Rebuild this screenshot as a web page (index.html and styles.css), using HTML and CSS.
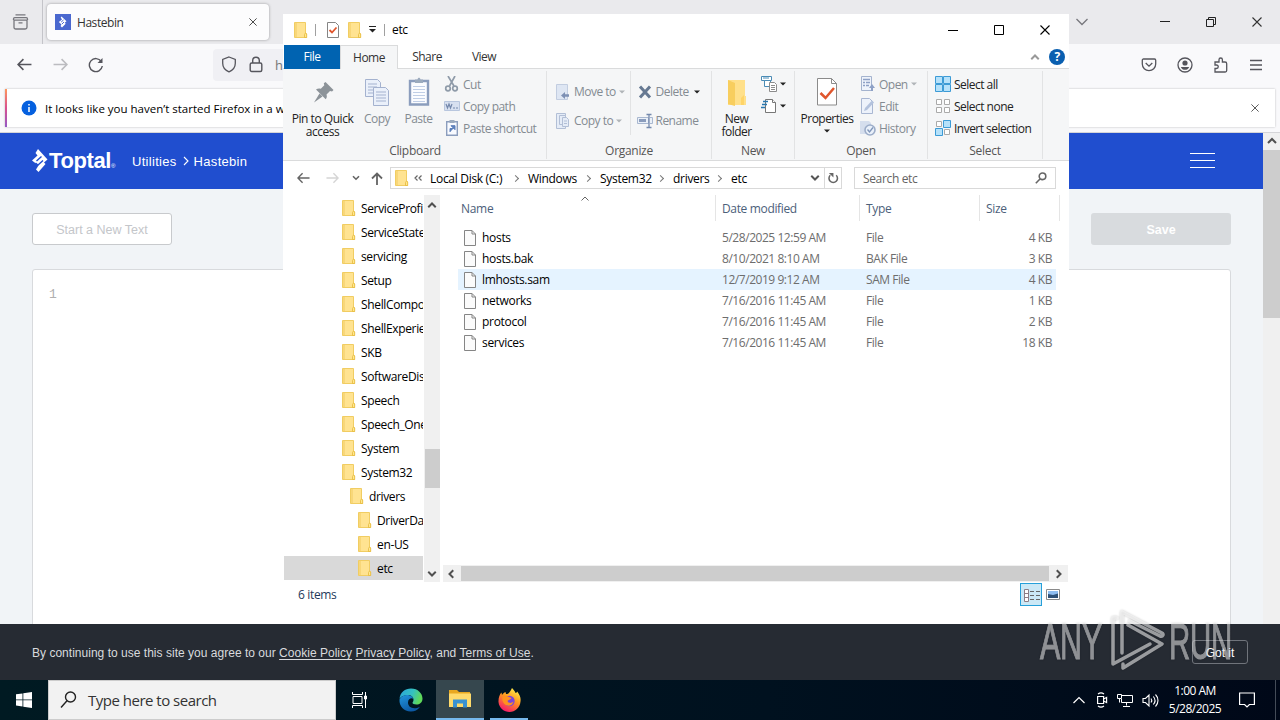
FILE: index.html
```html
<!DOCTYPE html>
<html lang="en">
<head>
    <meta charset="UTF-8">
    <meta name="viewport" content="width=device-width, initial-scale=1.0">
    <title>Hastebin</title>
    <link rel="stylesheet" href="styles.css">
</head>
<body>
    <svg class="sprite" width="0" height="0">
        <symbol id="folder" viewBox="0 0 14 16">
            <path d="M.5.5h11v11h1v4H.5z" fill="#ffe391" stroke="#f1cd62"/>
            <path d="M1 1h2v14H1z" fill="#f8d779"/>
            <path d="M10.5 15.5v-3l1-1.500 1.200 1v3.500z" fill="#ffe88f" stroke="#e6b93c" stroke-width=".8"/>
        </symbol>
        <symbol id="file" viewBox="0 0 12 16">
            <path d="M.5.5h7.500l3.500 3.500v11.500H.5z" fill="#fbfbfb" stroke="#858585"/>
            <path d="M8 .5V4h3.500" fill="none" stroke="#858585"/>
        </symbol>
        <symbol id="down" viewBox="0 0 6 4"><path d="M0 .5h6L3 3.500z" fill="currentColor"/></symbol>
        <symbol id="chev" viewBox="0 0 8 8"><path d="M1 2.200l3 3 3-3" fill="none" stroke="currentColor" stroke-width="1.600"/></symbol>
        <symbol id="arrow" viewBox="0 0 14 12"><path d="M13.500 6H1M6 1L1 6l5 5" fill="none" stroke="currentColor" stroke-width="1.500"/></symbol>
        <symbol id="cross" viewBox="0 0 10 10"><path d="M.5.5l9 9M9.500.5l-9 9" fill="none" stroke="currentColor" stroke-width="1.100"/></symbol>
    </svg>

    <!-- Firefox -->
    <div class="browser">
        <div class="tabstrip">
            <div class="tab-tool">
                <svg width="17" height="16" viewBox="0 0 17 16" fill="none" stroke="#77777d" stroke-width="1.300"><path d="M3.500 .8h10M1.500 6V5c0-.8.5-1.300 1.300-1.300h11.400c.8 0 1.300.5 1.300 1.300v1M2 6.200h13v7c0 1-.7 1.800-1.800 1.800H3.800C2.700 15 2 14.200 2 13.200zM6.500 8.800h4"/></svg>
            </div>
            <div class="tab">
                <svg width="16" height="16" viewBox="0 0 16 16"><path fill="#4a68cf" d="M0 0h16v16H0z"/><path d="M6.500 2.500l5 4.800-1.800 1.500 1 1L7 13.500l-1.500-1.500 1-1.500L3.800 8 7 5.500 5.700 3.500z" fill="#fff"/><path d="M8.500 6l-2.300 2M9 8l-2 2" stroke="#4a68cf"/></svg>
                <span>Hastebin</span>
                <svg class="tab-close" width="8" height="8"><use href="#cross"/></svg>
            </div>
            <div class="win-buttons">
                <svg width="12" height="8" viewBox="0 0 12 8" fill="none" stroke="#77777d" stroke-width="1.300"><path d="M.5 1L6 6.500 11.500 1"/></svg>
                <svg width="10" height="10" viewBox="0 0 10 10" stroke="#222"><path d="M0 4.500h10"/></svg>
                <svg width="10" height="10" viewBox="0 0 10 10" fill="none" stroke="#222"><path d="M.5 2.500h7v7h-7zM2.500 2.500v-2h7v7h-2"/></svg>
                <svg width="10" height="10"><use href="#cross"/></svg>
            </div>
        </div>
        <div class="navbar">
            <svg class="dark" width="15" height="13"><use href="#arrow"/></svg>
            <svg class="faded flip" width="15" height="13"><use href="#arrow"/></svg>
            <svg width="16" height="16" viewBox="0 0 16 16" fill="none" stroke="#55555c" stroke-width="1.400"><path d="M13.300 4.500A6.500 6.500 0 1 0 14.300 9"/><path d="M14.500 1v5h-5z" fill="#55555c" stroke="none"/></svg>
            <div class="urlbar">
                <svg width="16" height="17" viewBox="0 0 16 17" fill="none" stroke="#55555c" stroke-width="1.300"><path d="M8 1l6.300 2.500v3.700c0 4-2.500 7-6.300 8.600C4.200 14.200 1.700 11.200 1.700 7.200V3.500z"/></svg>
                <svg width="14" height="17" viewBox="0 0 14 17" fill="none" stroke="#55555c" stroke-width="1.400"><rect x="1.200" y="7" width="11.600" height="8.500" rx="1.500"/><path d="M3.700 7V4.500a3.300 3.300 0 0 1 6.600 0V7"/></svg>
                <span>h</span>
            </div>
            <div class="nav-icons">
                <svg width="16" height="16" viewBox="0 0 16 16" fill="none" stroke="#55555c" stroke-width="1.300"><path d="M2.500 2h11c.7 0 1.200.5 1.200 1.200V7a6.700 6.700 0 0 1-13.400 0V3.200C1.300 2.500 1.800 2 2.500 2zM4.700 6L8 9.200 11.300 6"/></svg>
                <svg width="16" height="16" viewBox="0 0 16 16"><circle cx="8" cy="8" r="7" fill="none" stroke="#55555c" stroke-width="1.300"/><circle cx="8" cy="6" r="2.600" fill="#55555c"/><path d="M3.800 10h8.400c-.8 2-2.400 2.800-4.200 2.800S4.600 12 3.800 10z" fill="#55555c"/></svg>
                <svg width="16" height="16" viewBox="0 0 16 16" fill="none" stroke="#55555c" stroke-width="1.300"><path d="M2 15V11.500h1.500a1.700 1.700 0 0 0 0-3.500H2V5h4V2.700a1.700 1.700 0 0 1 3.400 0V5H12c1 0 1.700.7 1.700 1.700V13.500c0 .9-.6 1.500-1.500 1.500z"/></svg>
                <svg width="14" height="12" viewBox="0 0 14 12" stroke="#55555c" stroke-width="1.300"><path d="M1 1.500h12M1 6h12M1 10.500h12"/></svg>
            </div>
        </div>
        <div class="notice-wrap">
            <div class="notice">
                <svg width="16" height="16" viewBox="0 0 16 16"><circle cx="8" cy="8" r="7.500" fill="#0560df"/><path d="M8 7v5M8 4v1.600" stroke="#fff" stroke-width="1.500"/></svg>
                <span>It looks like you haven’t started Firefox in a wh</span>
                <svg class="notice-close" width="8" height="8"><use href="#cross"/></svg>
            </div>
        </div>
        <div class="viewport">
            <div class="page">
                <div class="page-header">
                    <svg class="toptal-mark" width="16" height="24" viewBox="0 0 16 24"><path d="M6 0l9.500 10.500-3.500 3 1.500 1.500L6.500 23 4 20.500l2.500-4L0 11.500l5.500-5L3.500 4z" fill="#fff"/><path d="M9.500 7.500L4.500 12M11 11.500l-5.500 5M6.500 16.500L3.500 14" stroke="#204ecf" stroke-width="1.400"/></svg>
                    <span class="toptal">Toptal<small>®</small></span>
                    <span class="crumb">Utilities</span>
                    <svg class="crumb-sep" width="6" height="10" viewBox="0 0 6 10" fill="none" stroke="#fff" stroke-width="1.100"><path d="M1 1l4 4-4 4"/></svg>
                    <span class="crumb">Hastebin</span>
                    <svg class="burger" width="25" height="16" viewBox="0 0 25 16" stroke="#fff"><path d="M0 .5h25M0 7.500h25M0 14.500h25"/></svg>
                </div>
                <div class="actions">
                    <button class="btn new-text">Start a New Text</button>
                    <button class="btn save">Save</button>
                </div>
                <div class="editor">1</div>
            </div>
            <div class="page-scroll">
                <svg width="10" height="10" viewBox="0 0 10 10" fill="none" stroke="#505050" stroke-width="2"><path d="M1 7l4-4 4 4"/></svg>
                <div class="page-thumb"></div>
            </div>
        </div>
        <div class="cookies">
            <p>By continuing to use this site you agree to our <u>Cookie Policy</u> <u>Privacy Policy</u>, and <u>Terms of Use</u>.</p>
            <button class="got-it">Got it</button>
        </div>
    </div>

    <!-- File Explorer -->
    <div class="explorer">
        <div class="titlebar">
            <svg width="14" height="16"><use href="#folder"/></svg>
            <i class="bar"></i>
            <svg class="check-doc" width="12" height="16" viewBox="0 0 12 16" fill="none"><path d="M.5.5h8l3 3v12H.5z" fill="#fff" stroke="#858585"/><path d="M2.500 8l2.500 2.500 4.500-5" stroke="#e0562d" stroke-width="1.800"/></svg>
            <svg width="14" height="16"><use href="#folder"/></svg>
            <svg width="7" height="7" viewBox="0 0 7 7"><path d="M0 .5h7" stroke="#222"/><path d="M0 3h7L3.500 6.500z" fill="#222"/></svg>
            <i class="bar"></i>
            <span class="title">etc</span>
            <div class="caption">
                <svg width="10" height="10" viewBox="0 0 10 10" stroke="#000"><path d="M0 5.500h10"/></svg>
                <svg width="10" height="10" viewBox="0 0 10 10" fill="none" stroke="#000"><path d="M.5.5h9v9h-9z"/></svg>
                <svg width="10" height="10"><use href="#cross"/></svg>
            </div>
        </div>
        <div class="tabs">
            <span class="tab-file">File</span>
            <span class="tab-home">Home</span>
            <span class="tab-share">Share</span>
            <span class="tab-view">View</span>
            <svg class="collapse" width="10" height="10"><use href="#chev"/></svg>
            <b class="help">?</b>
        </div>
        <div class="ribbon">
            <div class="group clipboard">
                <div class="tools">
                    <div class="big pin">
                        <svg width="32" height="34" viewBox="0 0 32 34"><path d="M18.500 6l8 8-1.500 1.500-2-.5-3.500 3.500c.7 2 .3 3.500-.8 4.800L9 13.500c1.500-1 3-1.300 4.800-.7l3.500-3.500-.5-2zM12.500 17.500l3 3L7 26.500z" fill="#8c9399"/></svg>
                        <span>Pin to Quick<br>access</span>
                    </div>
                    <div class="big copy off">
                        <svg width="26" height="34" viewBox="0 0 26 34" fill="#eaf0fa" stroke="#a4b2cf"><path d="M1.500 3.500h12l3 3v14h-15z"/><path d="M4 8h9M4 11h9M4 14h9M4 17h9"/><path d="M9.500 11.500h12l3 3v15h-15z"/><path d="M12 16h10M12 19h10M12 22h10M12 25h10"/></svg>
                        <span>Copy</span>
                    </div>
                    <div class="big paste off">
                        <svg width="22" height="34" viewBox="0 0 22 34"><path d="M2 5h18v23.500H2z" fill="#fbfcff" stroke="#8b9dbd" stroke-width="2.400"/><path d="M7 7V3.500h2.500C9.800 1 12.200 1 12.500 3.500H15V7z" fill="#9baabd"/><path d="M5 10.500h12M5 13.500h12M5 16.500h12M5 19.500h12M5 22.500h12M5 25.500h12" stroke="#c0cee6"/></svg>
                        <span>Paste</span>
                    </div>
                    <div class="smalls off">
                        <div><svg width="16" height="16" viewBox="0 0 16 16" fill="none" stroke="#8f9ba9" stroke-width="1.700"><path d="M4 0l6 10M11 0L5.500 10"/><circle cx="4" cy="12.500" r="2.300"/><circle cx="11" cy="12.500" r="2.300"/></svg>Cut</div>
                        <div><svg width="16" height="16" viewBox="0 0 16 16"><path d="M.5 3.500h15v9H.5z" fill="#d7e0f0" stroke="#b8c6de"/><path d="M2 6l1.500 4L5 6l1.500 4L8 6M9 10h2M12 10h2" fill="none" stroke="#7488ac" stroke-width="1.200"/></svg>Copy path</div>
                        <div><svg width="16" height="16" viewBox="0 0 16 16"><path d="M2.700 1.700h10.600v13.600H2.700z" fill="#f8faff" stroke="#8b9dbd" stroke-width="1.400"/><path d="M5.500 0h5v3h-5z" fill="#9baabd"/><path d="M6 12V8.500h3.500M7 5.700h4v4z" fill="#5d80bc" stroke="#5d80bc"/></svg>Paste shortcut</div>
                    </div>
                </div>
                <div class="name">Clipboard</div>
            </div>
            <div class="group organize">
                <div class="tools">
                    <div class="mids off">
                        <div><svg width="16" height="16" viewBox="0 0 16 16"><path d="M1.500.5h11v15h-11z" fill="#dee6f3" stroke="#c2cde0"/><path d="M6 11.500l4-3.500v2.300h4v2.500h-4V15z" fill="#7d90b4"/></svg>Move to <svg class="dd" width="6" height="4"><use href="#down"/></svg></div>
                        <div><svg width="16" height="16" viewBox="0 0 16 16" fill="#e5ecf7" stroke="#b2bfd6"><path d="M1.500.5h9v15h-9z"/><path d="M4.500 2.500h6v9h-6z"/><path d="M7.500 4.500h4l2 2v7h-6zM9 8h3M9 10.500h3"/></svg>Copy to <svg class="dd" width="6" height="4"><use href="#down"/></svg></div>
                    </div>
                    <div class="mids del off">
                        <div><svg width="16" height="16" viewBox="0 0 16 16"><path d="M3 2.500l10 11M13 2.500l-10 11" stroke="#667992" stroke-width="3"/></svg>Delete <svg class="dd black" width="6" height="4"><use href="#down"/></svg></div>
                        <div><svg width="16" height="16" viewBox="0 0 16 16"><path d="M.5 4.500h11v6H.5zM13 4.500h2.500v6H13" fill="#eaf0f8" stroke="#a9b8d0"/><path d="M2 6h7v3H2z" fill="#8b9dbd"/><path d="M9.500 1.500h5M12 1.500v13M9.500 14.500h5" stroke="#7489ad" stroke-width="1.300"/></svg>Rename</div>
                    </div>
                </div>
                <div class="name">Organize</div>
            </div>
            <div class="group new">
                <div class="tools">
                    <div class="big newf">
                        <svg width="22" height="34" viewBox="0 0 22 34"><path d="M2 4h17v16h1v9H2z" fill="#ffe08a"/><path d="M2 4l7 3v23l-7-2z" fill="#f8ce5e"/><path d="M15 29v-7l3-3v10z" fill="#ffd467"/></svg>
                        <span>New<br>folder</span>
                    </div>
                    <div class="smalls icons">
                        <div><svg width="16" height="16" viewBox="0 0 16 16" fill="#fff"><path d="M.5.5h10v4H.5z" stroke="#4a8bb5"/><path d="M2 2h6" stroke="#4a8bb5"/><path d="M3.500 4.500h6v6h-6z" stroke="#4a8bb5"/><path d="M8.500 6.500h5l2 2v7h-7zM10 9.500h4M10 11.500h4M10 13.500h4" stroke="#8c8c8c"/></svg><svg class="dd black" width="6" height="4"><use href="#down"/></svg></div>
                        <div><svg width="16" height="16" viewBox="0 0 16 16" fill="#fff"><path d="M4.500 1.500h7l3 3v10h-10z" stroke="#777"/><path d="M11.500 1.500v3h3" stroke="#777"/><path d="M2 3.500h5M1 6.500h5M0 9.500h4" stroke="#2878b0" stroke-width="1.300"/></svg><svg class="dd black" width="6" height="4"><use href="#down"/></svg></div>
                    </div>
                </div>
                <div class="name">New</div>
            </div>
            <div class="group open">
                <div class="tools">
                    <div class="big props">
                        <svg width="22" height="34" viewBox="0 0 22 34" fill="none"><path d="M1.500 2.500h14l5 5v21.500h-19z" fill="#fff" stroke="#8b8b8b"/><path d="M15.500 2.500v5h5" stroke="#8b8b8b"/><path d="M4.500 17l5 5L18 12" stroke="#e0562d" stroke-width="2.500"/></svg>
                        <span>Properties</span>
                        <svg class="dd black" width="6" height="4"><use href="#down"/></svg>
                    </div>
                    <div class="smalls off">
                        <div><svg width="16" height="16" viewBox="0 0 16 16"><path d="M1.500.5h10v14h-10z" fill="#eef3fb" stroke="#a4b3ce"/><path d="M3 3.500h7M3 6.500h2M6 6.500h4M3 9.500h2M6 9.500h3" stroke="#8ea1c6" stroke-width="1.300"/><path d="M11 15v-3H9l3-4 3 4h-2v3z" fill="#8ea1c6"/></svg>Open <svg class="dd" width="6" height="4"><use href="#down"/></svg></div>
                        <div><svg width="16" height="16" viewBox="0 0 16 16"><path d="M1.500.5h8l3 3v12h-11z" fill="#edf2fb" stroke="#a9b7d2"/><path d="M4 13l1-3L12 2.500l2 2L7 12z" fill="#b3c2dd"/></svg>Edit</div>
                        <div><svg width="16" height="16" viewBox="0 0 16 16"><path d="M0 1h9l2 2v11H0z" fill="#d5deed"/><circle cx="10" cy="10" r="5" fill="#e9f0fa" stroke="#9cadc9" stroke-width="1.600"/><path d="M7.500 9.500L9.500 12 13 7.500" fill="none" stroke="#7f95b9" stroke-width="1.300"/></svg>History</div>
                    </div>
                </div>
                <div class="name">Open</div>
            </div>
            <div class="group select">
                <div class="tools">
                    <div class="smalls">
                        <div><svg width="16" height="16" viewBox="0 0 16 16" fill="#b5e1fa" stroke="#3c9bd6"><path d="M.5.5h7v7h-7zM8.500.5h7v7h-7zM.5 8.500h7v7h-7zM8.500 8.500h7v7h-7z"/></svg>Select all</div>
                        <div><svg width="16" height="16" viewBox="0 0 16 16" fill="#fff" stroke="#aaa"><path d="M1.500 1.500h5v5h-5zM9.500 1.500h5v5h-5zM1.500 9.500h5v5h-5zM9.500 9.500h5v5h-5z"/></svg>Select none</div>
                        <div><svg width="16" height="16" viewBox="0 0 16 16" fill="#fff" stroke="#aaa"><path d="M1.500 1.500h5v5h-5zM9.500 9.500h5v5h-5z"/><path d="M8.500.5h7v7h-7zM.5 8.500h7v7h-7z" fill="#b5e1fa" stroke="#3c9bd6"/></svg>Invert selection</div>
                    </div>
                </div>
                <div class="name">Select</div>
            </div>
        </div>
        <div class="address-row">
            <svg class="nav-back" width="13" height="12"><use href="#arrow"/></svg>
            <svg class="nav-fwd flip" width="13" height="12"><use href="#arrow"/></svg>
            <svg class="nav-recent" width="8" height="8"><use href="#chev"/></svg>
            <svg class="nav-up" width="12" height="13" viewBox="0 0 12 13" fill="none" stroke="#646464" stroke-width="1.800"><path d="M6 13V1.500M1 6.500l5-5 5 5"/></svg>
            <div class="address">
                <svg width="14" height="16"><use href="#folder"/></svg>
                <svg class="laquo" width="8" height="6" viewBox="0 0 8 6" fill="none" stroke="#666" stroke-width="1.200"><path d="M3.500.5L1 3l2.500 2.500M7.500.5L5 3l2.500 2.500"/></svg>
                <span class="c1">Local Disk (C:)</span><i class="sep"></i>
                <span class="c2">Windows</span><i class="sep"></i>
                <span class="c3">System32</span><i class="sep"></i>
                <span class="c4">drivers</span><i class="sep"></i>
                <span class="c5">etc</span>
                <svg class="addr-down" width="10" height="10"><use href="#chev"/></svg>
                <svg class="refresh" width="12" height="13" viewBox="0 0 12 13" fill="none" stroke="#666" stroke-width="1.700"><path d="M9.500 3.500A4.600 4.600 0 1 1 3 3.500"/><path d="M1.500 1H6.500v5z" fill="#666" stroke="none"/></svg>
            </div>
            <div class="search">
                <span>Search etc</span>
                <svg width="12" height="12" viewBox="0 0 12 12" fill="none" stroke="#666" stroke-width="1.600"><circle cx="7.500" cy="4.300" r="3.300"/><path d="M5 7L.8 11.200"/></svg>
            </div>
        </div>
        <div class="content">
            <div class="tree">
                <div><svg width="14" height="16"><use href="#folder"/></svg>ServiceProfiles</div>
                <div><svg width="14" height="16"><use href="#folder"/></svg>ServiceState</div>
                <div><svg width="14" height="16"><use href="#folder"/></svg>servicing</div>
                <div><svg width="14" height="16"><use href="#folder"/></svg>Setup</div>
                <div><svg width="14" height="16"><use href="#folder"/></svg>ShellComponents</div>
                <div><svg width="14" height="16"><use href="#folder"/></svg>ShellExperiences</div>
                <div><svg width="14" height="16"><use href="#folder"/></svg>SKB</div>
                <div><svg width="14" height="16"><use href="#folder"/></svg>SoftwareDistribution</div>
                <div><svg width="14" height="16"><use href="#folder"/></svg>Speech</div>
                <div><svg width="14" height="16"><use href="#folder"/></svg>Speech_OneCore</div>
                <div><svg width="14" height="16"><use href="#folder"/></svg>System</div>
                <div><svg width="14" height="16"><use href="#folder"/></svg>System32</div>
                <div class="l2"><svg width="14" height="16"><use href="#folder"/></svg>drivers</div>
                <div class="l3"><svg width="14" height="16"><use href="#folder"/></svg>DriverData</div>
                <div class="l3"><svg width="14" height="16"><use href="#folder"/></svg>en-US</div>
                <div class="l3 current"><svg width="14" height="16"><use href="#folder"/></svg>etc</div>
            </div>
            <div class="tree-scroll">
                <svg class="up" width="10" height="10"><use href="#chev"/></svg>
                <div class="tree-thumb"></div>
                <svg width="10" height="10"><use href="#chev"/></svg>
            </div>
            <div class="list">
                <div class="row head">
                    <span>Name<svg class="sort" width="8" height="5" viewBox="0 0 8 5" fill="none" stroke="#666"><path d="M.5 4.500L4 1l3.500 3.500"/></svg></span><span>Date modified</span><span>Type</span><span>Size</span>
                </div>
                <div class="row"><span><svg width="12" height="16"><use href="#file"/></svg>hosts</span><span>5/28/2025 12:59 AM</span><span>File</span><span>4 KB</span></div>
                <div class="row"><span><svg width="12" height="16"><use href="#file"/></svg>hosts.bak</span><span>8/10/2021 8:10 AM</span><span>BAK File</span><span>3 KB</span></div>
                <div class="row hover"><span><svg width="12" height="16"><use href="#file"/></svg>lmhosts.sam</span><span>12/7/2019 9:12 AM</span><span>SAM File</span><span>4 KB</span></div>
                <div class="row"><span><svg width="12" height="16"><use href="#file"/></svg>networks</span><span>7/16/2016 11:45 AM</span><span>File</span><span>1 KB</span></div>
                <div class="row"><span><svg width="12" height="16"><use href="#file"/></svg>protocol</span><span>7/16/2016 11:45 AM</span><span>File</span><span>2 KB</span></div>
                <div class="row"><span><svg width="12" height="16"><use href="#file"/></svg>services</span><span>7/16/2016 11:45 AM</span><span>File</span><span>18 KB</span></div>
                <div class="list-scroll">
                    <svg class="left" width="10" height="10"><use href="#chev"/></svg>
                    <div class="list-thumb"></div>
                    <svg class="right" width="10" height="10"><use href="#chev"/></svg>
                </div>
            </div>
        </div>
        <div class="status">
            <span>6 items</span>
            <div class="view-details">
                <svg width="16" height="13" viewBox="0 0 16 13" fill="none" stroke="#666"><path d="M.5.5h4v12h-4zM.5 4.500h4M.5 8.500h4" fill="#fff" stroke="#8c7d86"/><path d="M6 2.500h4M12 2.500h4M6 6.500h4M12 6.500h4M6 10.500h4M12 10.500h4"/></svg>
            </div>
            <svg width="14" height="11" viewBox="0 0 14 11"><path d="M.5.5h13v10H.5z" fill="#fff" stroke="#8a8a8a"/><path d="M2 2h10v7H2z" fill="#8fbdf0"/><path d="M2 5l5 1 5-1.500V9H2z" fill="#2e5076"/></svg>
        </div>
    </div>

    <!-- Watermark -->
    <svg class="watermark" width="200" height="70" viewBox="0 0 200 70">
        <g fill="#fff" stroke="#fff" stroke-width="1" opacity=".5" font-family="Liberation Sans, sans-serif" font-size="50">
            <text x="4" y="53" textLength="62" lengthAdjust="spacingAndGlyphs">ANY</text>
            <text x="133" y="53" textLength="63" lengthAdjust="spacingAndGlyphs">RUN</text>
        </g>
        <g fill="none" stroke="#fff" stroke-width="3.500" stroke-linejoin="round" stroke-linecap="round" opacity=".55">
            <path d="M86 47V6l40 21c2 1 1 4-2 3L94 15"/>
            <path d="M81 12h-4v46l37-20"/>
            <path d="M92 19l34 19-39 24v-4"/>
        </g>
    </svg>

    <!-- Taskbar -->
    <div class="taskbar">
        <svg class="start" width="16" height="16" viewBox="0 0 16 16" fill="#fff"><path d="M0 2.300l6.500-.9v6.100H0zM7.300 1.300L16 0v7.500H7.300zM0 8.300h6.500v6.200L0 13.600zM7.300 8.300H16V16l-8.700-1.300z"/></svg>
        <div class="task-search">
            <svg width="17" height="18" viewBox="0 0 17 18" fill="none" stroke="#222" stroke-width="1.400"><circle cx="10.500" cy="6" r="5"/><path d="M7 9.800L1 16.500"/></svg>
            <span>Type here to search</span>
        </div>
        <div class="task-item">
            <svg width="16" height="16" viewBox="0 0 16 16" fill="none" stroke="#fff"><path d="M.5 0v2.500h10V0M1 4.500h9v7H1zM.5 16v-2.500h10V16M13.500 0v16"/><path d="M12.500 4h2v3h-2z" fill="#fff"/></svg>
        </div>
        <div class="task-item">
            <svg width="24" height="24" viewBox="0 0 24 24">
                <defs>
                    <linearGradient id="e1" x1="0" y1="0" x2="1" y2="0.300"><stop offset="0" stop-color="#2aa5dd"/><stop offset=".6" stop-color="#35c1c0"/><stop offset="1" stop-color="#5fd95a"/></linearGradient>
                    <linearGradient id="e2" x1="0" y1="0" x2="0.500" y2="1"><stop offset="0" stop-color="#2296dd"/><stop offset="1" stop-color="#0c59a4"/></linearGradient>
                </defs>
                <path d="M.5 11C1 4.500 6 .5 12 .5c7 0 11.500 5 11.500 10 0 4-3 6-6 6-2.500 0-4-.8-4-1.700 0-.8 1-1 1-3C14.500 9 12 7 9 7 5 7 1.500 9 .5 11z" fill="url(#e1)"/>
                <path d="M.5 11.500C2 8 6 6.500 9 7c3 .3 5 2 5.400 4-1.400-1.500-5.400-.5-5.400 3.500 0 5 5.500 7.500 12 4.200-2.500 3.500-6 5-9.500 4.800C5 23.300 0 18.500.5 11.500z" fill="url(#e2)"/>
            </svg>
        </div>
        <div class="task-item active">
            <svg width="22" height="19" viewBox="0 0 22 19"><path d="M0 1h8l2 2h11v15H0z" fill="#e9a820"/><path d="M0 4.500h22V18H0z" fill="#ffda6b"/><path d="M4 18.500v-8h14v8h-4v-4H8v4z" fill="#3a92d2"/></svg>
        </div>
        <div class="task-item running">
            <svg width="23" height="24" viewBox="0 0 23 24">
                <defs><linearGradient id="f1" x1=".8" y1="0" x2=".3" y2="1"><stop offset="0" stop-color="#fff44f"/><stop offset=".45" stop-color="#ff9a1f"/><stop offset="1" stop-color="#f5156c"/></linearGradient></defs>
                <path d="M14 0c2 2 3 3.500 3.500 5 1-.2 1.500-.8 1.700-1.500C22 7 23 10 22.500 13.500 22 19.500 17 24 11.500 24S1 20 .5 14C.3 10 1.500 6.500 3.500 4.500L4 7c1-1.500 2-2.300 3.500-3l.5 2c3 0 4-2 6-6z" fill="url(#f1)"/>
                <circle cx="11.500" cy="13" r="5.200" fill="#7a45dc"/>
                <path d="M4.500 9c2-1.500 4.500-1 6.500 0l2.500 1c-1 2-3.500 1.500-4 3 1 2.500 4 2.500 6 .5-1 4.500-6 5.500-9 2.500-2-2-2.500-4.500-2-7z" fill="#ff921e"/>
            </svg>
        </div>
        <div class="tray">
            <svg width="12" height="8" viewBox="0 0 12 8" fill="none" stroke="#fff" stroke-width="1.200"><path d="M.5 7L6 1.500 11.500 7"/></svg>
            <svg width="12" height="16" viewBox="0 0 12 16" fill="none" stroke="#fff" stroke-width="1.200"><path d="M1.600 4.500h6v7h-6zM7.600 7l3-1.500v5l-3-1.500M2 2c2-1.500 4-1.500 6 0M2 14c2 1.500 4 1.500 6 0"/></svg>
            <svg width="16" height="15" viewBox="0 0 16 15" fill="none" stroke="#fff"><path d="M5 2.500h10.500v7H4.500V6M9.500 9.500v3M6 13.500h7M.5 1.500h4v4h-4zM2.500 5.500v4"/></svg>
            <svg width="17" height="15" viewBox="0 0 17 15" fill="none" stroke="#fff" stroke-width="1.100"><path d="M1 5.500h2.500L7 2v11L3.500 9.500H1zM9 5.500c1 1.300 1 2.700 0 4M11.300 3.500c2.200 2.500 2.200 5.500 0 8M13.500 1.500c3.300 3.500 3.300 8.500 0 12"/></svg>
            <div class="clock">1:00 AM<br>5/28/2025</div>
            <svg class="notif" width="16" height="16" viewBox="0 0 16 16" fill="none" stroke="#fff" stroke-width="1.200"><path d="M.6 1h14.800v11.500h-5L8 15l-2.400-2.500h-5z"/></svg>
        </div>
    </div>
</body>
</html>
```
FILE: styles.css
```css
* {
    box-sizing: border-box;
}

body {
    margin: 0;
    width: 1280px;
    height: 720px;
    overflow: hidden;
    position: relative;
    font-family: "Open Sans", "Noto Sans", sans-serif;
    font-size: 12px;
    letter-spacing: -0.35px;
    color: #000;
}

svg {
    display: block;
    flex: none;
}

button {
    font-family: "Liberation Sans", sans-serif;
}

.sprite {
    position: absolute;
}

.flip {
    transform: scaleX(-1);
}

/* Firefox */
.browser {
    height: 680px;
    display: flex;
    flex-direction: column;
    background: #f9f9fb;
}

.tabstrip {
    height: 44px;
    display: flex;
    align-items: center;
    background: #eaeaed;
    color: #333;
}

.tab-tool {
    width: 43px;
    height: 44px;
    padding: 14px 0 0 12px;
    border-right: 1px solid #c4c4c9;
}

.tab {
    width: 222px;
    height: 36px;
    margin-left: 4px;
    padding: 0 12px 0 8px;
    display: flex;
    align-items: center;
    gap: 6px;
    background: #fcfcfd;
    border-radius: 4px;
    box-shadow: 0 0 3px rgba(0, 0, 0, 0.35);
    letter-spacing: -0.45px;
}

.tab-close {
    margin-left: auto;
}

.win-buttons {
    margin-left: auto;
    padding-right: 18px;
    display: flex;
    align-items: center;
    gap: 36px;
}

.win-buttons svg:first-child {
    margin-right: 36px;
}

.navbar {
    height: 41px;
    display: flex;
    align-items: center;
    padding-left: 17px;
    gap: 21px;
}

.navbar > svg:nth-child(3) {
    margin-left: -1px;
}

.dark {
    color: #55555c;
}

.faded {
    color: #bcbcc0;
}

.urlbar {
    width: 852px;
    height: 32px;
    margin-left: 88px;
    padding-left: 8px;
    display: flex;
    align-items: center;
    gap: 12px;
    background: #f0f0f4;
    border-radius: 4px;
    color: #777;
    font-size: 13px;
}

.nav-icons {
    margin-left: auto;
    padding-right: 17px;
    display: flex;
    align-items: center;
    gap: 20px;
}

.notice-wrap {
    height: 48px;
    padding: 4px 5px 6px;
    border-bottom: 1px solid #d5d5d8;
}

.notice {
    height: 38px;
    padding: 0 16px 0 14px;
    display: flex;
    align-items: center;
    gap: 8px;
    background: #fff;
    border-left: 2px solid;
    border-image: linear-gradient(#ff9a5a, #d9508f, #9059c8) 1;
    box-shadow: 0 0 2px rgba(0, 0, 0, 0.25);
    font-size: 11.5px;
    letter-spacing: 0;
}

.notice-close {
    margin-left: auto;
    color: #444;
}

.viewport {
    height: 491px;
    display: flex;
}

.page {
    width: 1263px;
    background: #f1f4f7;
    overflow: hidden;
}

.page-header {
    height: 56px;
    padding: 0 48px 0 32px;
    display: flex;
    align-items: center;
    background: #204ecf;
    color: #fff;
    font-family: "Liberation Sans", sans-serif;
}

.toptal {
    width: 84px;
    padding-left: 1px;
    font-size: 22px;
    font-weight: bold;
    letter-spacing: -0.4px;
    white-space: nowrap;
}

.toptal small {
    font-size: 6px;
    font-weight: normal;
}

.crumb {
    font-size: 13px;
    letter-spacing: 0.3px;
}

.crumb-sep {
    margin: 0 5px 0 6px;
}

.burger {
    margin-left: auto;
}

.actions {
    display: flex;
    justify-content: space-between;
    padding: 24px 32px;
}

.btn {
    width: 140px;
    height: 32px;
    padding: 2px 0 0;
    border-radius: 3px;
    font-size: 12.5px;
}

.new-text {
    background: #fff;
    border: 1px solid #c8cacd;
    color: #c4c6ca;
}

.save {
    background: #d8dbde;
    border: none;
    color: #fff;
    font-weight: bold;
}

.editor {
    height: 400px;
    margin: 0 32px;
    padding: 17px 16px;
    background: #fff;
    border: 1px solid #d8dadd;
    border-radius: 3px;
    color: #b0b0b0;
    font-family: "Liberation Mono", monospace;
    font-size: 13px;
}

.page-scroll {
    width: 17px;
    background: #f0f0f0;
    display: flex;
    flex-direction: column;
    align-items: center;
}

.page-scroll svg {
    margin: 3px 0 4px;
}

.page-thumb {
    width: 17px;
    height: 168px;
    background: #cdcdcd;
}

.cookies {
    height: 56px;
    padding: 0 32px;
    display: flex;
    align-items: center;
    justify-content: space-between;
    background: #262b33;
    color: #d8dadd;
    font-family: "Liberation Sans", sans-serif;
    letter-spacing: 0.02px;
}

.cookies p {
    margin: 2px 0 0;
}

.cookies u {
    text-underline-offset: 2px;
}

.got-it {
    width: 56px;
    height: 24px;
    padding: 2px 0 0;
    background: none;
    border: 1px solid #70747b;
    border-radius: 3px;
    color: #fff;
    font-size: 12px;
}

/* Explorer window, floats over the browser */
.explorer {
    position: absolute;
    left: 283px;
    top: 14px;
    width: 786px;
    height: 594px;
    background: #fff;
}

.titlebar {
    height: 31px;
    padding-left: 11px;
    display: flex;
    align-items: center;
}

.bar {
    width: 1px;
    height: 12px;
    margin: 0 9px 0 7px;
    background: #a0a0a0;
}

.check-doc {
    margin: 0 9px 0 2px;
}

.titlebar .check-doc + svg {
    margin-right: 7px;
}

.titlebar svg + .bar:nth-of-type(2) {
    margin: 0 7px 0 8px;
}

.caption {
    margin-left: auto;
    padding-right: 19px;
    display: flex;
    gap: 36px;
}

.tabs {
    height: 24px;
    padding: 0 4px 0 1px;
    display: flex;
    align-items: center;
    border-bottom: 1px solid #dadbdc;
    line-height: 23px;
    text-align: center;
    letter-spacing: -0.5px;
    color: #333;
}

.tab-file {
    width: 56px;
    height: 24px;
    background: #0063b1;
    color: #fff;
}

.tab-home {
    width: 58px;
    height: 24px;
    background: #f5f6f7;
    border: 1px solid #dadbdc;
    border-bottom: none;
}

.tab-share {
    width: 58px;
}

.tab-view {
    width: 56px;
}

.collapse {
    margin-left: auto;
    margin-right: 9px;
    color: #999;
    transform: scaleY(-1);
}

.help {
    width: 16px;
    height: 16px;
    border-radius: 50%;
    background: #0a5fb0;
    color: #fff;
    line-height: 16px;
}

.ribbon {
    height: 92px;
    padding-left: 1px;
    display: flex;
    background: #f5f6f7;
    border-bottom: 1px solid #dadbdc;
    line-height: 13px;
    letter-spacing: -0.52px;
    color: #222;
}

.group {
    display: flex;
    flex-direction: column;
    border-right: 1px solid #e2e3e4;
    height: 88px;
    margin-top: 2px;
}

.clipboard {
    width: 263px;
}

.organize {
    width: 165px;
}

.new {
    width: 83px;
}

.open {
    width: 133px;
}

.select {
    width: 115px;
}

.tools {
    height: 73px;
    display: flex;
}

.name {
    text-align: center;
    color: #555;
    line-height: 14px;
    letter-spacing: -0.3px;
}

.off {
    color: #848b92;
}

.big {
    display: flex;
    flex-direction: column;
    align-items: center;
    padding-top: 5px;
    text-align: center;
    white-space: nowrap;
}

.big span {
    padding-top: 2px;
}

.pin {
    width: 77px;
    letter-spacing: -0.45px;
}

.copy {
    width: 32px;
}

.paste {
    width: 51px;
}

.newf {
    width: 49px;
}

.props {
    width: 64px;
}

.props .dd {
    margin-top: 4px;
}

.smalls > div,
.mids > div {
    height: 22px;
    display: flex;
    align-items: center;
    gap: 3px;
    white-space: nowrap;
}

.smalls {
    padding-top: 2px;
}

.props + .smalls {
    padding-left: 1px;
}

.mids {
    padding: 6px 0 0 8px;
    width: 85px;
}

.mids > div {
    height: 29px;
}

.mids.del {
    padding-left: 6px;
    margin-left: 1px;
    border-left: 1px solid #e2e3e4;
    height: 64px;
}

.del .dd {
    margin-left: 2px;
}

.dd {
    color: #b0b4b8;
}

.black {
    color: #222;
}

.select .smalls {
    padding-left: 7px;
}

.address-row {
    height: 34px;
    padding-left: 14px;
    display: flex;
    align-items: center;
    color: #646464;
}

.nav-fwd {
    margin-left: 16px;
    color: #d5d5d5;
}

.nav-recent {
    margin-left: 13px;
}

.nav-up {
    margin-left: 11px;
}

.address {
    width: 452px;
    height: 22px;
    margin-left: 7px;
    padding-left: 4px;
    display: flex;
    align-items: center;
    border: 1px solid #d9d9d9;
    color: #000;
    letter-spacing: -0.3px;
}

.laquo {
    margin: 0 8px 0 5px;
}

.sep {
    width: 5px;
    height: 5px;
    margin-right: 10px;
    border-top: 1.4px solid #777;
    border-right: 1.4px solid #777;
    transform: rotate(45deg);
}

.c1 {
    width: 83px;
}

.c2 {
    width: 57px;
}

.c3 {
    width: 58px;
}

.c4 {
    width: 43px;
}

.addr-down {
    margin-left: auto;
    margin-right: 4px;
    color: #555;
}

.refresh {
    width: 17px;
    height: 20px;
    padding: 4px 2px;
    border-left: 1px solid #d9d9d9;
}

.search {
    width: 202px;
    height: 22px;
    margin-left: 12px;
    padding: 0 8px;
    display: flex;
    align-items: center;
    justify-content: space-between;
    border: 1px solid #d9d9d9;
}

.content {
    height: 387px;
    display: flex;
}

.tree {
    width: 140px;
    padding: 1px 0 0 1px;
    overflow: hidden;
    white-space: nowrap;
}

.tree div {
    height: 24px;
    padding-left: 58px;
    display: flex;
    align-items: center;
    gap: 5px;
}

.tree .l2 {
    padding-left: 66px;
}

.tree .l3 {
    padding-left: 74px;
}

.tree .current {
    background: #d9d9d9;
}

.tree-scroll {
    width: 16px;
    padding: 5px 0 3px;
    display: flex;
    flex-direction: column;
    align-items: center;
    background: #f0f0f0;
    color: #505050;
    margin-left: 1px;
}

.up {
    transform: scaleY(-1);
}

.tree-thumb {
    width: 15px;
    height: 39px;
    margin: 239px 0 auto;
    background: #cdcdcd;
}

.list {
    width: 625px;
    margin-left: 3px;
    padding-left: 15px;
    display: flex;
    flex-direction: column;
}

.row {
    width: 598px;
    height: 21px;
    display: grid;
    grid-template-columns: 258px 144px 120px 1fr;
    align-items: center;
    color: #6d6d6d;
    letter-spacing: -0.45px;
}

.row span {
    display: flex;
    align-items: center;
    padding-left: 6px;
}

.row span:first-child {
    gap: 6px;
    color: #000;
    letter-spacing: -0.3px;
}

.row span:last-child {
    justify-content: flex-end;
    padding-right: 4px;
}

.hover {
    background: #e5f3ff;
}

.row.head {
    width: 602px;
    height: 26px;
    margin-bottom: 6px;
    color: #4c607a;
    letter-spacing: -0.35px;
}

.row.head span {
    height: 26px;
    border-right: 1px solid #e5e5e5;
}

.row.head span:first-child {
    padding-left: 3px;
    color: #4c607a;
}

.row.head span:last-child {
    justify-content: flex-start;
}

.sort {
    margin-left: 82px;
    margin-bottom: 20px;
}

.list-scroll {
    width: 625px;
    height: 17px;
    margin-top: auto;
    margin-left: -15px;
    padding: 0 4px 0 3px;
    display: flex;
    align-items: center;
    justify-content: space-between;
    background: #f0f0f0;
    color: #505050;
}

.list-thumb {
    width: 588px;
    height: 15px;
    background: #cdcdcd;
}

.left {
    transform: rotate(90deg);
}

.right {
    transform: rotate(-90deg);
}

.status {
    height: 24px;
    padding: 0 9px 0 15px;
    display: flex;
    align-items: center;
    color: #1e395b;
}

.view-details {
    width: 22px;
    height: 23px;
    margin: 1px 4px 0 auto;
    padding: 5px 3px;
    background: #cbe8f6;
    border: 1px solid #26a0da;
}

.watermark {
    position: absolute;
    left: 1036px;
    top: 606px;
    filter: drop-shadow(0 0 1px rgba(0, 0, 0, 0.4));
}

/* Taskbar */
.taskbar {
    height: 40px;
    display: flex;
    align-items: center;
    background: linear-gradient(90deg, #001a22, #00111f 60%, #000818);
    color: #fff;
}

.start {
    margin: 0 16px;
}

.task-search {
    width: 288px;
    height: 40px;
    padding-left: 11px;
    display: flex;
    align-items: center;
    gap: 11px;
    background: #f2f2f2;
    border: 1px solid #ccc;
    color: #333;
    font-size: 15px;
    letter-spacing: -0.5px;
}

.task-item {
    width: 48px;
    height: 40px;
    margin-right: 1px;
    display: flex;
    align-items: center;
    justify-content: center;
}

.task-item svg {
    margin-bottom: 1px;
}

.task-search + .task-item {
    margin-right: 3px;
}

.active {
    background: #36474e;
    border-bottom: 2px solid #76b9ed;
}

.running {
    background: linear-gradient(#76b9ed, #76b9ed) center bottom / 38px 2px no-repeat;
}

.tray {
    height: 40px;
    margin-left: auto;
    margin-right: 4px;
    padding-right: 20px;
    display: flex;
    align-items: center;
    gap: 9px;
    border-right: 1px solid #444c58;
}

.tray svg:first-child {
    margin-right: 2px;
}

.clock {
    width: 54px;
    line-height: 18px;
    text-align: center;
    letter-spacing: -0.5px;
}

.notif {
    margin-left: 8px;
}
```
